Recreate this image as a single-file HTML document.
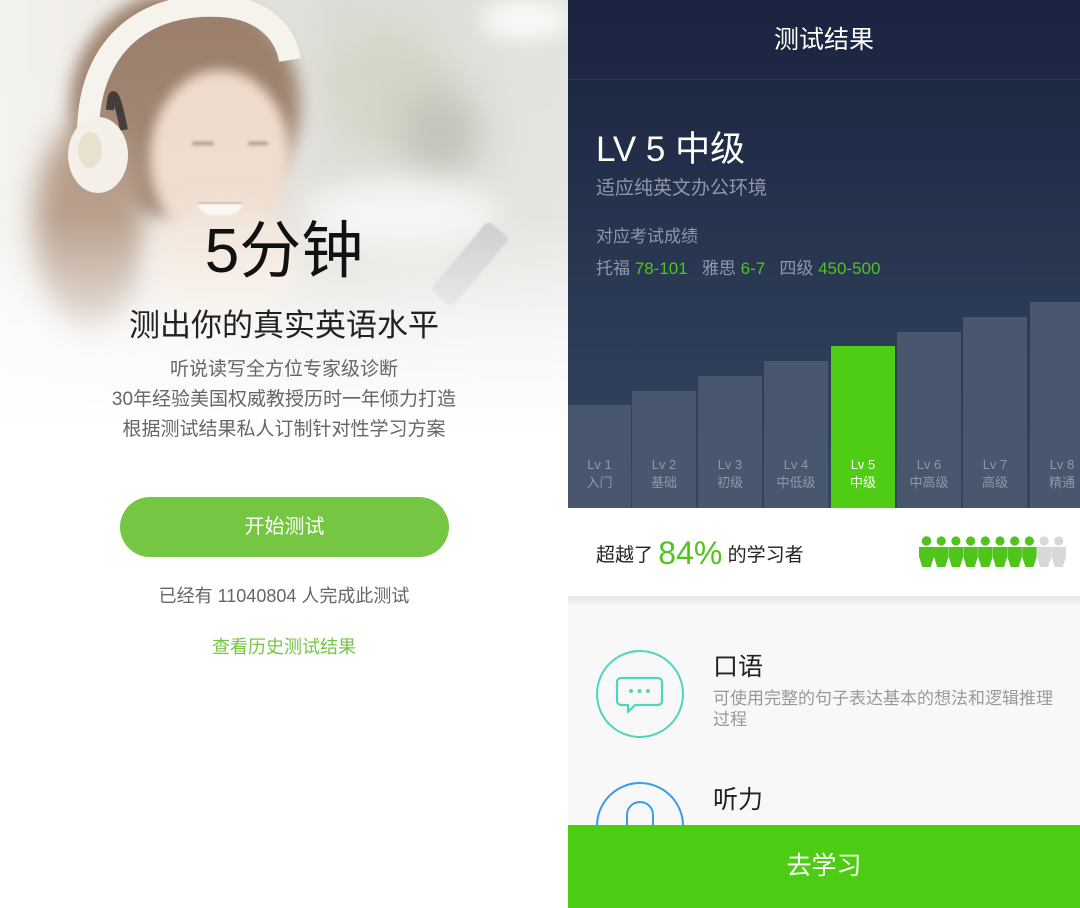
<!DOCTYPE html>
<html><head><meta charset="utf-8">
<style>
*{margin:0;padding:0;box-sizing:border-box}
body{width:1080px;height:908px;overflow:hidden;background:#fff;font-family:"Liberation Sans","Noto Sans CJK SC",sans-serif;position:relative}
.abs{position:absolute}
#left{left:0;top:0;width:568px;height:908px;background:#fff;overflow:hidden}
.blob{position:absolute;border-radius:50%}
.c{text-align:center;width:568px;left:0}
#right{left:568px;top:0;width:512px;height:908px;overflow:hidden;background:#f8f8f8}
#dark{left:0;top:0;width:512px;height:508px;background:linear-gradient(#1a2340 0%,#1f2a45 20%,#2b3a54 60%,#334560 100%)}
.bar{position:absolute;bottom:0;background:#48566e;color:#8d98a8;font-size:13px;text-align:center;line-height:18px}
.bar span{position:absolute;left:0;right:0;bottom:16px}
</style></head><body>
<div id="left" class="abs">
  <div class="abs" style="left:0;top:0;width:568px;height:460px;background:linear-gradient(90deg,#f4f2ef 0%,#ece9e4 30%,#dcdcd6 60%,#e2e2de 100%)"></div>
  <div class="blob" style="left:330px;top:30px;width:120px;height:120px;background:#d2d4c4;filter:blur(20px)"></div>
  <div class="blob" style="left:400px;top:90px;width:80px;height:90px;background:#bfc1b6;filter:blur(18px)"></div>
  <div class="blob" style="left:480px;top:0px;width:90px;height:40px;background:#f8f8f6;filter:blur(10px)"></div>
  <div class="blob" style="left:300px;top:180px;width:200px;height:70px;background:#f4f4f2;filter:blur(15px)"></div>
  <div class="blob" style="left:70px;top:-10px;width:230px;height:230px;background:#9a7e6a;filter:blur(8px)"></div>
  <div class="blob" style="left:35px;top:120px;width:110px;height:210px;background:#b09580;filter:blur(14px)"></div>
  <div class="blob" style="left:150px;top:70px;width:140px;height:175px;background:#efdaca;filter:blur(6px)"></div>
  <div class="blob" style="left:150px;top:200px;width:150px;height:120px;background:#f0e2d6;filter:blur(12px)"></div>
  <div class="abs" style="left:192px;top:142px;width:22px;height:3px;background:#9a8a80;border-radius:3px;filter:blur(1.5px)"></div>
  <div class="abs" style="left:248px;top:142px;width:20px;height:3px;background:#9a8a80;border-radius:3px;filter:blur(1.5px)"></div>
  <div class="abs" style="left:198px;top:202px;width:44px;height:13px;background:#fbf6f2;border-radius:0 0 22px 22px;border-top:2px solid #d3b3a5;filter:blur(.7px)"></div>
  <svg class="abs" style="left:0;top:0" width="320" height="220" viewBox="0 0 320 220">
    <path d="M88 130 C 90 40, 150 2, 220 6 C 260 8, 285 30, 290 60" fill="none" stroke="#f6f2ec" stroke-width="22"/>
    <path d="M110 110 C 112 80, 118 100, 124 130" fill="none" stroke="#3a3330" stroke-width="8"/>
    <ellipse cx="98" cy="155" rx="30" ry="38" fill="#f3eee7"/>
    <ellipse cx="90" cy="150" rx="12" ry="18" fill="#e6dfcc"/>
  </svg>
  <div class="abs" style="left:425px;top:250px;width:90px;height:28px;background:#c5c7c7;transform:rotate(-50deg);border-radius:6px;filter:blur(1px)"></div>
  <div class="abs" style="left:0;top:0;width:568px;height:480px;background:linear-gradient(rgba(255,255,255,0) 0%,rgba(255,255,255,.1) 45%,rgba(255,255,255,.7) 68%,#fff 90%)"></div>
  <div class="abs c" style="top:212px;font-size:62px;line-height:80px;color:#111">5分钟</div>
  <div class="abs c" style="top:305px;font-size:31px;line-height:42px;color:#222">测出你的真实英语水平</div>
  <div class="abs c" style="top:355px;font-size:19px;line-height:30px;color:#666">听说读写全方位专家级诊断<br>30年经验美国权威教授历时一年倾力打造<br>根据测试结果私人订制针对性学习方案</div>
  <div class="abs" style="left:120px;top:497px;width:329px;height:60px;border-radius:30px;background:#74c643;color:#fff;font-size:20px;line-height:60px;text-align:center">开始测试</div>
  <div class="abs c" style="top:583px;font-size:18px;line-height:26px;color:#666">已经有 11040804 人完成此测试</div>
  <div class="abs c" style="top:634px;font-size:18px;line-height:26px;color:#74c643">查看历史测试结果</div>
</div>

<div id="right" class="abs">
  <div id="dark" class="abs">
    <div class="abs" style="left:0;top:0;width:512px;height:80px;text-align:center;color:#fff;font-size:25px;line-height:80px;border-bottom:1px solid #2d3854">测试结果</div>
    <div class="abs" style="left:28px;top:128px;color:#fff;font-size:35px;line-height:44px">LV 5 中级</div>
    <div class="abs" style="left:28px;top:176px;color:#8e97a8;font-size:19px;line-height:26px">适应纯英文办公环境</div>
    <div class="abs" style="left:28px;top:226px;color:#8e97a8;font-size:17px;line-height:22px">对应考试成绩</div>
    <div class="abs" style="left:28px;top:257px;color:#8e97a8;font-size:17px;line-height:24px;white-space:pre">托福 <b style="color:#4fc41b;font-weight:normal">78-101</b>   雅思 <b style="color:#4fc41b;font-weight:normal">6-7</b>   四级 <b style="color:#4fc41b;font-weight:normal">450-500</b></div>
    <div class="bar" style="left:0;width:63px;height:103px"><span>Lv 1<br>入门</span></div>
    <div class="bar" style="left:64px;width:64px;height:117px"><span>Lv 2<br>基础</span></div>
    <div class="bar" style="left:130px;width:64px;height:132px"><span>Lv 3<br>初级</span></div>
    <div class="bar" style="left:196px;width:64px;height:147px"><span>Lv 4<br>中低级</span></div>
    <div class="bar" style="left:263px;width:64px;height:162px;background:#4fcc14;color:#fff"><span>Lv 5<br>中级</span></div>
    <div class="bar" style="left:329px;width:64px;height:176px"><span>Lv 6<br>中高级</span></div>
    <div class="bar" style="left:395px;width:64px;height:191px"><span>Lv 7<br>高级</span></div>
    <div class="bar" style="left:462px;width:64px;height:206px"><span>Lv 8<br>精通</span></div>
  </div>
  <div class="abs" style="left:0;top:508px;width:512px;height:88px;background:#fff"></div>
  <div class="abs" style="left:28px;top:528px;font-size:19px;line-height:50px;color:#222;white-space:nowrap">超越了 <span style="color:#4fc41b;font-size:32px;vertical-align:-3px">84%</span> 的学习者</div>
  <svg class="abs" style="left:351px;top:535px" width="150" height="36" viewBox="0 0 150 36">
    <g id="p">
      <circle cx="7.5" cy="6" r="4.6"/>
      <path d="M0.3 12 H14.7 V22 L11.5 32 H3.5 L0.3 22 Z"/>
    </g>
    <g fill="#4fc41b">
      <use href="#p" x="0"/><use href="#p" x="14.7"/><use href="#p" x="29.4"/><use href="#p" x="44.1"/>
      <use href="#p" x="58.8"/><use href="#p" x="73.5"/><use href="#p" x="88.2"/><use href="#p" x="102.9"/>
    </g>
    <g fill="#d8d8d8"><use href="#p" x="117.6"/><use href="#p" x="132.3"/></g>
  </svg>
  <div class="abs" style="left:0;top:596px;width:512px;height:8px;background:linear-gradient(#e8e8e8,#f4f4f4)"></div>
  <svg class="abs" style="left:26px;top:648px" width="92" height="92" viewBox="0 0 92 92">
    <circle cx="46" cy="46" r="43" fill="none" stroke="#4fd6b8" stroke-width="2"/>
    <path d="M27 30 H64 a4 4 0 0 1 4 4 V53 a4 4 0 0 1 -4 4 H41 L34 64 V57 H27 a4 4 0 0 1 -4 -4 V34 a4 4 0 0 1 4 -4 Z" fill="none" stroke="#4fd6b8" stroke-width="2.2" stroke-linejoin="round"/>
    <circle cx="37" cy="43" r="2" fill="#4fd6b8"/><circle cx="45.5" cy="43" r="2" fill="#4fd6b8"/><circle cx="54" cy="43" r="2" fill="#4fd6b8"/>
  </svg>
  <div class="abs" style="left:145px;top:650px;font-size:25px;line-height:34px;color:#222">口语</div>
  <div class="abs" style="left:145px;top:688px;width:355px;font-size:17px;line-height:21px;color:#999">可使用完整的句子表达基本的想法和逻辑推理过程</div>
  <svg class="abs" style="left:26px;top:780px" width="92" height="50" viewBox="0 0 92 50">
    <circle cx="46" cy="46" r="43" fill="none" stroke="#3a9be8" stroke-width="2"/>
    <path d="M33 50 V35 a13 13 0 0 1 26 0 V50" fill="none" stroke="#3a9be8" stroke-width="2"/>
  </svg>
  <div class="abs" style="left:145px;top:783px;font-size:25px;line-height:34px;color:#222">听力</div>
  <div class="abs" style="left:0;top:825px;width:512px;height:83px;background:#4ccd13;color:#fff;font-size:25px;line-height:83px;text-align:center">去学习</div>
</div>
</body></html>
